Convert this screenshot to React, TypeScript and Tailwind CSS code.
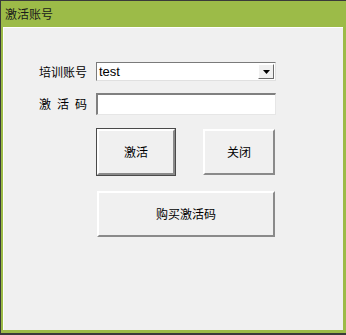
import { useState } from "react";

const cjk = "font-['SimSun','Noto_Sans_CJK_SC',sans-serif]";

function RaisedButton({ label, focused, className }: { label: string; focused?: boolean; className: string }) {
  return (
    <button
      className={`${className} ${
        focused ? "border border-[#4a4a4a]" : "border border-transparent"
      } bg-[#f0f0f0] p-0`}
    >
      <div className="h-full w-full border-t-2 border-l-2 border-t-white border-l-white border-r-2 border-b-2 border-r-[#8a8a8a] border-b-[#8a8a8a] flex items-center justify-center text-[12px] text-black">
        {label}
      </div>
    </button>
  );
}

export default function App() {
  const [code, setCode] = useState("");

  return (
    <div className={`w-[346px] h-[335px] flex flex-col bg-[#9cbb48] border-t border-l border-b-2 border-[#3a3a3a] ${cjk}`}>
      {/* Title bar */}
      <div className="h-[26px] shrink-0 flex items-center pl-[4px] text-[12px] text-[#1a1a1a]">激活账号</div>

      {/* Client area */}
      <div className="flex-1 ml-[2px] mr-[3px] mb-[3px] bg-[#f0f0f0] border-t border-l border-white pl-[35px] pt-[34px]">
        <div className="flex items-center gap-[8px]">
          <span className="w-[49px] whitespace-nowrap text-[12px] text-black">培训账号</span>
          <div className="w-[180px] h-[19px] flex items-center bg-white border-t border-l border-[#7a7a7a] border-r border-b border-r-[#e0e0e0] border-b-[#e0e0e0]">
            <span className="flex-1 pl-[2px] text-[13px] leading-none font-['Liberation_Sans',Arial,sans-serif] text-black">test</span>
            <div className="w-[16px] h-[15px] mr-[1px] flex items-center justify-center bg-[#f0f0f0] border border-t-white border-l-white border-r-[#6a6a6a] border-b-[#6a6a6a]">
              <svg width="7" height="4" viewBox="0 0 7 4">
                <path d="M0 0h7L3.5 4z" fill="#000" />
              </svg>
            </div>
          </div>
        </div>

        <div className="flex items-center gap-[8px] mt-[12px]">
          <span className="w-[49px] whitespace-nowrap text-[12px] text-black tracking-[6px]">激活码</span>
          <input
            value={code}
            onChange={(e) => setCode(e.target.value)}
            className="w-[180px] h-[22px] bg-white outline-none border-t-2 border-l-2 border-[#808080] border-r border-b border-r-[#e6e6e6] border-b-[#e6e6e6]"
          />
        </div>

        <div className="flex ml-[57px] mt-[13px] gap-[26px]">
          <RaisedButton label="激活" focused className="w-[80px] h-[48px]" />
          <RaisedButton label="关闭" className="w-[74px] h-[48px]" />
        </div>

        <div className="ml-[57px] mt-[14px]">
          <RaisedButton label="购买激活码" className="w-[180px] h-[48px]" />
        </div>
      </div>
    </div>
  );
}
